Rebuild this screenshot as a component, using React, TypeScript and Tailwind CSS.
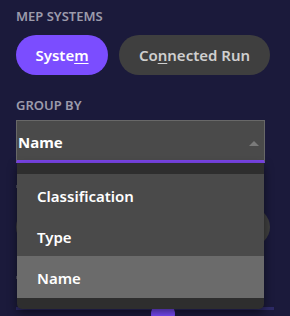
import React from "react";

export default function App() {
  const font = { fontFamily: '"Noto Sans", "Open Sans", sans-serif' };
  return (
    <div
      className="relative w-[290px] h-[316px] overflow-hidden bg-[#1b1a3b] px-4"
      style={font}
    >
      <div className="pt-[7px] text-[13px] leading-[18px] font-semibold uppercase text-[#9c9bab]">
        MEP Systems
      </div>
      <div className="mt-[10px] flex gap-[11px]">
        <button className="h-10 w-[92px] rounded-full bg-[#7b4dff] text-[15px] font-semibold text-white">
          Syste<span className="underline underline-offset-2">m</span>
        </button>
        <button className="h-10 w-[151px] rounded-full bg-[#3f3f3f] text-[15px] font-semibold text-[#cfcfcf]">
          Co<span className="underline underline-offset-2">n</span>nected Run
        </button>
      </div>
      <div className="mt-[21px] text-[13px] leading-[18px] font-semibold uppercase text-[#9c9bab]">
        Group By
      </div>
      <div className="mt-[6px] flex h-[43px] w-[249px] items-center justify-between border border-b-[3px] border-[#686868] border-b-[#7a45e6] bg-[#4a4a4a] pl-[1px] pr-[5px] pt-[4px]">
        <span className="text-[15px] font-bold text-white">Name</span>
        <svg width="10" height="6" viewBox="0 0 10 6">
          <path d="M0 6 L5 1 L10 6 Z" fill="#7a7a7a" />
        </svg>
      </div>
      {/* underlying content (mostly hidden by the popup) */}
      <div className="mt-[22px] h-[3px] w-[2px] bg-[#4a4960]" />
      <div className="mt-[20px] flex gap-[11px]">
        <div className="h-[38px] w-[120px] rounded-full bg-[#3f3f3f]" />
        <div className="h-[38px] w-[123px] rounded-full bg-[#3f3f3f]" />
      </div>
      <div className="mt-[30px] h-[3px] w-[2px] bg-[#4a4960]" />
      <div className="relative mt-[23px] h-[8px]">
        <div className="absolute left-0 right-0 top-[5px] h-[3px] bg-[#2d2a66]" />
        <div className="absolute left-[135px] top-0 h-6 w-6 rounded-full bg-[#7b4dff]" />
      </div>

      {/* popup */}
      <div className="absolute left-[17px] top-[163px] flex h-[146px] w-[247px] flex-col rounded-b-[5px] bg-[#2e2e2e] py-[11px] shadow-[0_4px_10px_rgba(0,0,0,0.5)]">
        <div className="flex h-[42px] items-center bg-[#4a4a4a] pl-[20px] pt-[2px] text-[15px] font-semibold text-white">
          Classification
        </div>
        <div className="flex h-[41px] items-center bg-[#4a4a4a] pl-[20px] pt-[2px] text-[15px] font-semibold text-white">
          Type
        </div>
        <div className="flex h-[42px] items-center bg-[#6b6b6b] pl-[20px] pt-[2px] text-[15px] font-semibold text-white">
          Name
        </div>
      </div>
    </div>
  );
}
